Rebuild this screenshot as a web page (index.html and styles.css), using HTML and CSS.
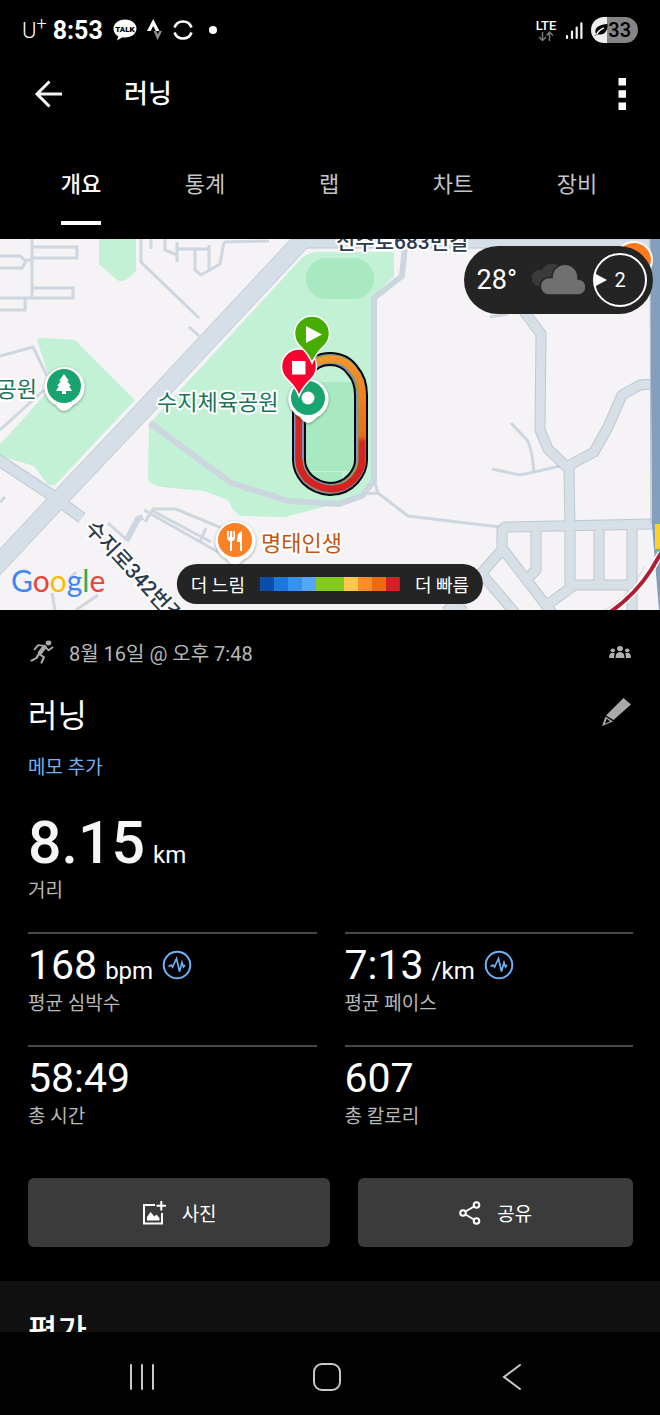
FILE: index.html
```html
<!DOCTYPE html>
<html lang="ko">
<head>
<meta charset="utf-8">
<meta name="viewport" content="width=device-width, initial-scale=1">
<title>러닝</title>
<link rel="stylesheet" href="styles.css">
</head>
<body>
<div class="app">
  <div class="status-bar">
    <span class="carrier">U<sup>+</sup></span>
    <span class="clock">8:53</span>
    <svg class="status-talk" width="24" height="22" viewBox="0 0 24 22" aria-hidden="true">
      <path d="M12 0.5C5.4 .5 .5 4.600.5 9.700c0 3.300 2 6.100 4.800 7.600L4 21.500l5.400-3.200c.8.100 1.700.200 2.600.200 6.600 0 11.500-4 11.500-9S18.600.5 12 .5z" fill="#fff"/>
      <text x="12" y="12.500" text-anchor="middle" class="talk-text">TALK</text>
    </svg>
    <svg class="status-strava" width="16" height="22" viewBox="0 0 16 22" aria-hidden="true">
      <path d="M0 12 6.200 0l6.300 12H8.800L6.200 7 3.700 12z" fill="#fff"/>
      <path d="M6.500 12h2.600l1.600 3.300 1.700-3.300H15l-4.400 9z" fill="#8c8c8c"/>
    </svg>
    <svg width="20" height="20" viewBox="0 0 20 20" fill="none" stroke="#fff" stroke-width="2.600" aria-hidden="true">
      <path d="M1.500 7.500A9 9 0 0 1 18.500 7.500M18.500 12.500A9 9 0 0 1 1.500 12.500"/>
    </svg>
    <span class="status-dot"></span>
    <div class="status-right">
      <svg width="22" height="23" viewBox="0 0 22 23" aria-hidden="true">
        <text x="11" y="11" text-anchor="middle" class="lte-text">LTE</text>
        <path d="M7.500 13v8M4 18l3.500 3.500L11 18M14.500 22v-8.500M11.500 16.500l3-3.500 3.500 3.500" fill="none" stroke="#777" stroke-width="1.500"/>
      </svg>
      <svg width="18" height="19" viewBox="0 0 18 19" stroke="#f4f4f4" stroke-width="2.200" stroke-linecap="round" aria-hidden="true">
        <path d="M2 15v2M7 10.500V17M11.700 6.500V17M16.400 2.300V17"/>
      </svg>
      <span class="battery">
        <svg width="14" height="14" viewBox="0 0 14 14" aria-hidden="true"><path d="M0 13C3 12 2 11 1.500 9.500.500 4 6 1.500 13.500 1c.5 6-2.500 11-8 10.500L3 11.500 1 13z" fill="#000"/><path d="M2.500 11.500C4 8.500 6 6.500 10 5" stroke="#eee" stroke-width="1.400" fill="none"/></svg>33</span>
    </div>
  </div>

  <header class="app-header">
    <button class="icon-button" type="button" aria-label="뒤로">
      <svg width="30" height="30" viewBox="0 0 30 30" fill="none" stroke="#f4f4f4" stroke-width="3"><path d="M28 15H3M15.500 2.500 3 15l12.500 12.500"/></svg>
    </button>
    <h1 class="app-title">러닝</h1>
    <button class="icon-button" type="button" aria-label="더보기">
      <svg width="8" height="32" viewBox="0 0 8 32" fill="#fff"><path d="M.5 0h7.500v7.500H.5zM.5 12.300h7.500v7.500H.5zM.5 24.500h7.500V32H.5z"/></svg>
    </button>
  </header>

  <nav class="tabs" aria-label="활동">
    <a class="tab tab-active" href="#overview" aria-current="page"><span>개요</span></a>
    <a class="tab" href="#stats"><span>통계</span></a>
    <a class="tab" href="#laps"><span>랩</span></a>
    <a class="tab" href="#charts"><span>차트</span></a>
    <a class="tab" href="#gear"><span>장비</span></a>
  </nav>

  <main class="content" id="overview">
    <section class="map" aria-label="지도">
      <svg class="map-canvas" viewBox="0 239 660 371">
        <defs>
          <linearGradient id="pace" gradientUnits="userSpaceOnUse" x1="0" y1="350" x2="0" y2="496">
            <stop offset="0" stop-color="#f59a2c"/><stop offset=".3" stop-color="#ee8220"/>
            <stop offset=".59" stop-color="#e2701a"/><stop offset=".63" stop-color="#d3271f"/>
            <stop offset="1" stop-color="#d61f26"/>
          </linearGradient>
          <filter id="shadow" x="-30%" y="-30%" width="160%" height="160%"><feDropShadow dx="0" dy="1" stdDeviation="1.500" flood-opacity=".4"/></filter>
        </defs>
        <rect y="239" width="660" height="371" fill="#f5f3f5"/>

        <g fill="#c3f1d5">
          <path d="M99 239v25l18 16q3 2 9 0l10-9v-32z"/>
          <path d="M37 340q2-3 8-2l30 2 60 60-80 85h-7L34 466 0 456v-12l17-18 35-40z"/>
          <path d="M149 424 299 261q7-9 20-9h75v24l-22 22v185l-18 16-31 8-38 10-45-1-7-6-5-10-24-9-42-4q-13-2-14-9z"/>
        </g>
        <g fill="#a9e9c2">
          <rect x="306" y="258" width="68" height="41" rx="20"/>
          <path d="M306 382h49v89h-49zM306 472h36v15h-36z"/>
        </g>

        <g fill="none" stroke="#ced7e0" stroke-width="3">
          <path d="M32 239v58M32 247h45v11H32M0 256h20l6 5-4 7H0M26 260h6M0 298h73v-10H32M25 298v12H0"/>
          <path d="M141 239v23l58 56M151 239v10M165 239v11l12 5M177 242v20M177 249h32M195 249v21l6 5 19-11 4-22M209 245v27M224 242l45-1M189 327l10 9"/>
          <path d="M0 356l33-9 14 29M0 430l44-40"/>
          <path d="M145 522l8-13h23l48 20-3 20M144 510l74 42M151 510l60 32M206 528l-6 14M108 523l18 16M0 502l5-5M52 593l3 17M76 572 70 578M76 610l22-15"/>
          <path d="M511 423l16 17q5 8 7 33M492 469l28 6 14-3 26-6M374 480l4 13 30 23 92 11M362 494l16-1M490 317l18-3"/>
        </g>
        <path d="M126 541l12-22 5-2" fill="none" stroke="#ced7e0" stroke-width="6"/>

        <path d="M405 246l-3 30-28 22v183l-12 15-23 8-50-3-58-18-81-60" fill="none" stroke="#ccd6df" stroke-width="6" stroke-linejoin="round"/>

        <g fill="none" stroke-linejoin="round">
          <path d="M520 306l21 28-1 96 8 19 21 20 1 58M668 383l-28 2-18 10-14 32-14 25-26 14M653 524l-148 3-3 3v20l-25 28M502 548l50 65M536 528v42l-8 8M570 524v58l4 3h58M599 528v57M632 527v84M573 586l-30 22M481 573l34 40M446 612l9-9 9 9" stroke="#bdc8d1" stroke-width="11"/>
          <path d="M520 306l21 28-1 96 8 19 21 20 1 58M668 383l-28 2-18 10-14 32-14 25-26 14M653 524l-148 3-3 3v20l-25 28M502 548l50 65M536 528v42l-8 8M570 524v58l4 3h58M599 528v57M632 527v84M573 586l-30 22M481 573l34 40M446 612l9-9 9 9" stroke="#d7e0e6" stroke-width="9"/>
        </g>

        <path d="M-3 459l50 33 35 26" fill="none" stroke="#bdc8d1" stroke-width="12"/>
        <path d="M-1 550 43 503 120 422 291 239h370v9H307L146 420 58 513-1 576z" fill="#d6dfe7" stroke="#bdc8d1"/>
        <path d="M-3 459l50 33 35 26" fill="none" stroke="#d6dfe7" stroke-width="10"/>

        <path d="M650 239h10v371h-1l-7-85z" fill="#849fbd"/>
        <path d="M650 239l1 285" stroke="#aebccc" fill="none"/>
        <path d="M655 524h5v25h-5z" fill="#fcd12a"/>
        <path d="M601 612q25-10 44-46" fill="none" stroke="#d4d4d8" stroke-width="1"/>
        <path d="M609 613q26-18 42-43l10-17" fill="none" stroke="#fff" stroke-width="7"/>
        <path d="M609 613q26-18 42-43l10-17" fill="none" stroke="#b01d34" stroke-width="4"/>

        <g fill="none">
          <path d="M330 359q15 0 23 12 8 9 8 24v65q0 10-8 19-9 10-23 10-14-1-23-10-8-9-8-19v-65q0-14 8-24 8-12 23-12z" stroke="#08080c" stroke-width="14"/>
          <path d="M330 359q15 0 23 12 8 9 8 24v65q0 10-8 19-9 10-23 10-14-1-23-10-8-9-8-19v-65q0-14 8-24 8-12 23-12z" stroke="#7a91c6" stroke-width="10"/>
          <path d="M331 359q15 0 23 12 7 9 7 24v65q0 10-8 19-9 10-23 10-14-1-23-10-8-9-8-19v-65q0-14 8-24 8-12 23-12z" stroke="#91a33a" stroke-width="8"/>
          <path d="M331 359q15 0 23 12 8 9 8 24v65q0 10-8 19-9 10-23 10-14-1-24-10-8-9-8-19v-65q0-14 9-24 8-12 23-12z" stroke="url(#pace)" stroke-width="7"/>
          <path d="M299 400v60" stroke="#d3271f" stroke-width="7"/>
          <path d="M303 420v40" stroke="#7a91c6" stroke-width="2"/>
        </g>

        <g filter="url(#shadow)">
          <path d="M64 411q-5-1-8-6a20 20 0 1 1 17 0q-4 5-9 6z" fill="#fff"/>
          <path d="M308 423q-5-1-8-6a20 20 0 1 1 17 0q-4 5-9 6z" fill="#fff"/>
          <path d="M235 565q-5-1-8-6a20 20 0 1 1 17 0q-4 5-9 6z" fill="#fff"/>
        </g>
        <circle cx="64" cy="386" r="17" fill="#18a36f"/>
        <path d="M64 374l-5 7h2l-4 5h2l-3 5h6v3h4v-3h6l-3-5h2l-4-5h2z" fill="#fff"/>
        <circle cx="308" cy="398" r="17" fill="#18a36f"/>
        <circle cx="308" cy="398" r="6.500" fill="#fff"/>
        <circle cx="235" cy="540" r="17" fill="#fb8127"/>
        <path d="M227 531v6q0 4 3 4v10h2v-10q3 0 3-4v-6h-1.600v6h-1.200v-6h-2.200v6h-1.200v-6zM242 531q-5 2-5 8v3h3v9h2z" fill="#fff"/>

        <path d="M299 396q-3-8-11-16a17.500 17.500 0 1 1 22 0q-8 8-11 16z" fill="#f6032f" stroke="#fff" stroke-width="1.500"/>
        <path d="M292 361h13.500v13.500H292z" fill="#fff"/>
        <path d="M312 363q-3-8-11-16a17.500 17.500 0 1 1 22 0q-8 8-11 16z" fill="#46ad00" stroke="#fff" stroke-width="1.500"/>
        <path d="M306 326l16 8.500-16 8.500z" fill="#fff"/>

        <g class="map-label">
          <text x="37" y="397" text-anchor="end" class="label-park">공원</text>
          <text x="157" y="410" class="label-park">수지체육공원</text>
          <text x="261" y="551" class="label-food">명태인생</text>
          <text x="336" y="249" class="label-road">신수로683번길</text>
          <text transform="translate(84 529) rotate(47)" class="label-road">수지로342번길</text>
        </g>
        <circle cx="634" cy="260" r="19" fill="#fff"/>
        <circle cx="634" cy="260" r="17" fill="#fb7a1e"/>
        <text x="11" y="592" class="google"><tspan fill="#4285f4">G</tspan><tspan fill="#ea4335">o</tspan><tspan fill="#fbbc05">o</tspan><tspan fill="#4285f4">g</tspan><tspan fill="#34a853">l</tspan><tspan fill="#ea4335">e</tspan></text>
      </svg>

      <div class="weather">
        <span>28°</span>
        <svg width="54" height="32" viewBox="0 0 54 32" aria-hidden="true">
          <path d="M9 22a8 8 0 0 1-1-16q2 0 3 .5A11 11 0 0 1 31 6l-3 16z" fill="#3b3b3b"/>
          <path d="M18 31a8.500 8.500 0 0 1 0-17.500h3a13 13 0 0 1 26-.500v2a8 8 0 0 1 0 16z" fill="#707070" stroke="#242424" stroke-width="1.500"/>
        </svg>
        <span class="wind">
          <svg width="54" height="54" viewBox="0 0 54 54" aria-hidden="true"><circle cx="27" cy="27" r="26" fill="none" stroke="#fff" stroke-width="2"/><path d="M1 20l13 7-13 7z" fill="#fff"/></svg>
          <span class="wind-value">2</span>
        </span>
      </div>

      <div class="legend">
        <span>더 느림</span>
        <span class="legend-scale" aria-hidden="true"></span>
        <span>더 빠름</span>
      </div>
    </section>

    <section class="summary">
      <div class="row meta">
        <svg width="24" height="24" viewBox="0 0 24 28" preserveAspectRatio="none" aria-hidden="true" fill="none" stroke="#a9a9a9" stroke-linecap="round" stroke-linejoin="round">
          <circle cx="18.500" cy="3.500" r="2.800" fill="#a9a9a9" stroke="none"/>
          <path d="M14.500 8 10 15" stroke-width="4.500"/>
          <path d="M13 6.500 8 6 4.500 11M16 9l2.500 3 4-3.500" stroke-width="2"/>
          <path d="M9.500 16.500 14 20l-2.500 6.500M9 16 6.500 21l-5 3" stroke-width="2.200"/>
        </svg>
        <span class="date">8월 16일 @ 오후 7:48</span>
        <svg class="row-end" width="22" height="12" viewBox="0 0 22 14" preserveAspectRatio="none" fill="#b0b0b0" aria-hidden="true">
          <circle cx="11" cy="3" r="3"/><circle cx="3.800" cy="5" r="2.200"/><circle cx="18.200" cy="5" r="2.200"/>
          <path d="M6.500 14q0-7 4.500-7t4.500 7zM0 14q0-6 3.800-6 1.300 0 2 .8Q5 11 5 14zM22 14q0-6-3.800-6-1.300 0-2 .8Q17 11 17 14z"/>
        </svg>
      </div>
      <div class="row title-row">
        <h2 class="activity-name">러닝</h2>
        <button class="icon-button row-end" type="button" aria-label="편집">
          <svg width="29" height="28" viewBox="0 0 29 28" fill="#a9a9a9" fill-rule="evenodd"><path d="M21.500 0 29 6.500 11.500 22 4 17.500zM3.500 18.500 11 23.500 0 28zM4.700 20.700 3 25.500l5.300-2z"/></svg>
        </button>
      </div>
      <a class="memo" href="#memo">메모 추가</a>

      <div class="distance"><strong>8.15</strong> <span class="unit">km</span></div>
      <div class="stat-label">거리</div>

      <div class="stats">
        <div class="stat">
          <div class="stat-value">168 <span class="unit">bpm</span>
            <svg class="badge" width="30" height="30" viewBox="0 0 30 30" fill="none" stroke="#6fb1f5" stroke-width="2" aria-hidden="true"><circle cx="15" cy="15" r="13.300"/><path d="M6.500 16.500 9 15l1.500 2 4-8.500 3 13 2.500-9 1.500 4.500 1.500-2" stroke-width="1.700"/></svg>
          </div>
          <div class="stat-label">평균 심박수</div>
        </div>
        <div class="stat">
          <div class="stat-value">7:13 <span class="unit">/km</span>
            <svg class="badge" width="30" height="30" viewBox="0 0 30 30" fill="none" stroke="#6fb1f5" stroke-width="2" aria-hidden="true"><circle cx="15" cy="15" r="13.300"/><path d="M6.500 16.500 9 15l1.500 2 4-8.500 3 13 2.500-9 1.500 4.500 1.500-2" stroke-width="1.700"/></svg>
          </div>
          <div class="stat-label">평균 페이스</div>
        </div>
        <div class="stat">
          <div class="stat-value">58:49</div>
          <div class="stat-label">총 시간</div>
        </div>
        <div class="stat">
          <div class="stat-value">607</div>
          <div class="stat-label">총 칼로리</div>
        </div>
      </div>

      <div class="actions">
        <button class="action action-photo" type="button">
          <svg width="24" height="24" viewBox="0 0 24 24" fill="none" stroke="#fff" stroke-width="2" aria-hidden="true"><path d="M13 4H2v18.500h18V12M14.500 4.800H24M19.300 0v9.500"/><path d="M5 19.500V16l3.500-5 4 4.500 2-2 3 3.500v2.500z" fill="#fff" stroke="none"/></svg>
          사진
        </button>
        <button class="action action-share" type="button">
          <svg width="22" height="24" viewBox="0 0 22 24" fill="none" stroke="#fff" stroke-width="2" aria-hidden="true"><circle cx="17.500" cy="4" r="2.800"/><circle cx="4" cy="12" r="2.800"/><circle cx="17.500" cy="20" r="2.800"/><path d="M15 5.500 6.500 10.500M6.500 13.500l8.500 5"/></svg>
          공유
        </button>
      </div>
    </section>

    <section class="rating"><h2 class="rating-title">평가</h2></section>
  </main>

  <nav class="system-nav" aria-label="시스템">
    <button class="system-button" type="button" aria-label="최근 앱"><svg width="28" height="28" viewBox="0 0 28 28" stroke="#c9c9c9" stroke-width="2" stroke-linecap="round"><path d="M3 2v24M14 2v24M25 2v24"/></svg></button>
    <button class="system-button" type="button" aria-label="홈"><svg width="28" height="28" viewBox="0 0 28 28" fill="none" stroke="#c9c9c9" stroke-width="2"><rect x="1" y="1" width="26" height="26" rx="8"/></svg></button>
    <button class="system-button" type="button" aria-label="뒤로"><svg width="20" height="28" viewBox="0 0 20 28" fill="none" stroke="#c9c9c9" stroke-width="2" stroke-linecap="round"><path d="M18 2 2 14l16 12"/></svg></button>
  </nav>
</div>
</body>
</html>
```
FILE: styles.css
```css
* { box-sizing: border-box; }

body {
  margin: 0;
  background: #000;
  color: #fff;
  font-family: Roboto, "Noto Sans CJK KR", sans-serif;
}

h1, h2 { margin: 0; font-weight: 400; }
a { text-decoration: none; }
svg { display: block; flex: none; }

button {
  margin: 0;
  padding: 0;
  border: 0;
  background: none;
  color: inherit;
  font-family: inherit;
}

.app {
  display: flex;
  flex-direction: column;
  height: 100vh;
}

/* Status bar */
.status-bar {
  display: flex;
  flex: none;
  align-items: center;
  height: 60px;
  padding: 0 22px;
  gap: 10px;
}
.carrier { font-size: 22px; font-weight: 300; }
.carrier sup { font-size: 18px; line-height: 0; }
.clock { font-size: 25px; font-weight: 700; }
.carrier + .clock { margin-left: -4px; }
.talk-text { font-size: 8px; font-weight: 900; fill: #000; }
.lte-text { font-size: 13px; font-weight: 500; fill: #fff; }
.status-dot { width: 8px; height: 8px; margin-left: 6px; border-radius: 50%; background: #fff; }
.status-right { display: flex; align-items: center; gap: 8px; margin-left: auto; }
.battery {
  display: flex;
  align-items: center;
  height: 26px;
  padding: 0 7px 0 3px;
  border-radius: 13px;
  background: linear-gradient(90deg, #eee 33%, #858585 33%);
  color: #000;
  font-size: 20px;
  font-weight: 500;
}

/* Header */
.app-header {
  display: flex;
  flex: none;
  align-items: center;
  height: 68px;
  padding: 0 34px;
}
.app-title { flex: 1; padding-left: 60px; font-size: 26px; font-weight: 500; line-height: 36px; }

/* Tabs */
.tabs {
  display: grid;
  flex: none;
  grid-template-columns: repeat(5, 1fr);
  height: 111px;
  padding: 0 21px 0 19px;
}
.tab { display: flex; justify-content: center; color: #c4c4c4; font-size: 22px; }
.tab span { height: 97px; line-height: 113px; }
.tab-active { color: #fff; font-weight: 500; }
.tab-active span { border-bottom: 4px solid #fff; }

.content { flex: 1; min-height: 0; overflow: hidden; }

/* Map */
.map { position: relative; }
.map-canvas { width: 100%; height: auto; }
.map-label {
  font-size: 22px;
  paint-order: stroke;
  stroke: #fff;
  stroke-width: 4px;
  stroke-linejoin: round;
}
.label-park { fill: #187458; }
.label-food { fill: #c45510; }
.label-road { fill: #2b3a4c; font-size: 21px; font-weight: 500; }
.google { font-family: Lato, sans-serif; font-size: 30px; }

.weather {
  position: absolute;
  top: 7px;
  right: 7px;
  display: flex;
  align-items: center;
  gap: 8px;
  height: 68px;
  padding: 0 6px 0 13px;
  border-radius: 34px;
  background: #242424;
  font-size: 27px;
}
.weather > span:first-child { margin-right: 6px; }
.wind { display: grid; place-items: center; font-size: 20px; }
.wind > * { grid-area: 1 / 1; }

.legend {
  position: absolute;
  bottom: 6px;
  left: 50%;
  display: flex;
  align-items: center;
  gap: 15px;
  height: 40px;
  padding: 0 14px;
  border-radius: 20px;
  background: #242424;
  font-size: 18px;
  white-space: nowrap;
  transform: translateX(-50%);
}
.legend-scale {
  width: 140px;
  height: 14px;
  background: linear-gradient(90deg,
    #0b4ea8 10%, #1c78db 10% 20%, #3492f0 20% 30%, #56a7fb 30% 40%,
    #84cb20 40% 60%, #ffca4d 60% 70%, #fc8d28 70% 80%, #f06b10 80% 90%, #d52025 90%);
}

/* Summary */
.summary { padding: 28px 27px 34px 28px; }
.row { display: flex; align-items: center; }
.row-end { margin-left: auto; }
.meta { height: 28px; padding: 0 2px; color: #b8b8b8; font-size: 20px; }
.date { padding-left: 15px; }
.title-row { height: 44px; margin: 28px 2px 16px 0; }
.activity-name { font-size: 32px; line-height: 46px; }
.title-row .icon-button { margin-top: -8px; }
.memo { display: block; color: #74b0f4; font-size: 19px; line-height: 28px; }

.distance { margin-top: 31px; font-size: 59px; line-height: 60px; }
.distance strong { font-weight: 500; color: #f6f6f6; }
.distance, .stat-value { display: flex; align-items: baseline; gap: 8px; }
.unit { font-size: 24px; line-height: 24px; }
.stat-label { margin-top: 1px; color: #b8b8b8; font-size: 19px; line-height: 28px; }
.distance + .stat-label { margin-top: 4px; }

.stats {
  display: grid;
  grid-template-columns: 1fr 1fr;
  gap: 27px 28px;
  margin-top: 27px;
}
.stat { padding-top: 7px; border-top: 2px solid #484848; }
.stat-value { font-size: 41px; line-height: 48px; }
.badge { align-self: center; margin-left: 1px; }

.actions { display: flex; gap: 28px; margin-top: 47px; }
.action {
  display: flex;
  align-items: center;
  justify-content: center;
  gap: 16px;
  height: 69px;
  border-radius: 6px;
  background: #3b3b3b;
  font-size: 19px;
}
.action-photo { flex: 11; }
.action-share { flex: 10; }

.rating { padding: 28px; background: #101010; }
.rating-title { font-size: 32px; font-weight: 500; line-height: 44px; }

/* System navigation */
.system-nav {
  display: grid;
  flex: none;
  grid-template-columns: repeat(3, 1fr);
  place-items: center;
  height: 83px;
  padding: 6px 56px 0 49px;
  background: #020202;
}
```
